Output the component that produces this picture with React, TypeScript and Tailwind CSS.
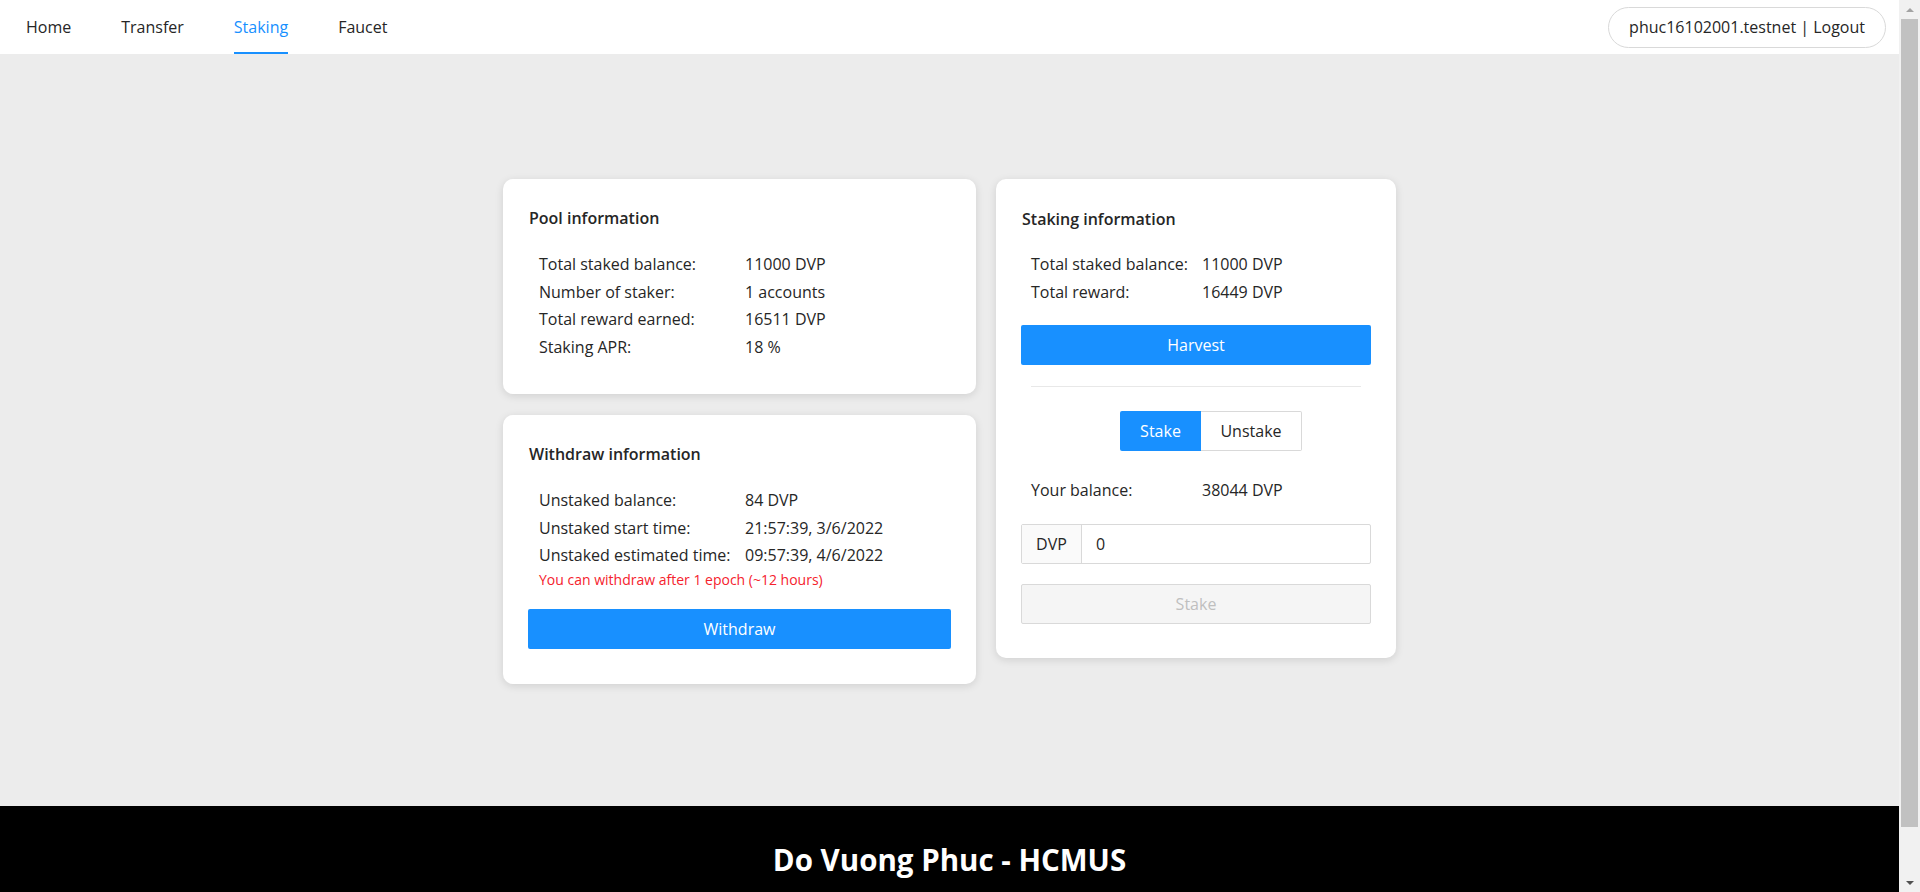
/**
 * Staking page
 */
import { ReactNode } from 'react';

const font = "font-['Open_Sans',sans-serif]";

function Navigation() {
  const items = ['Home', 'Transfer', 'Staking', 'Faucet'];

  return (
    <nav className="h-[54px] bg-white flex justify-between items-center pl-[1px] pr-[13px]">
      <div className="flex h-full">
        {items.map((item) => (
          <a
            key={item}
            className={
              item === 'Staking'
                ? 'mx-[25px] h-full flex items-center pt-[2px] border-b-2 border-[#1890ff] text-[#1890ff] text-[16px]'
                : 'mx-[25px] h-full flex items-center pt-[2px] border-b-2 border-transparent text-[#262626] text-[16px]'
            }
          >
            {item}
          </a>
        ))}
      </div>
      <button className="h-[41px] px-[20px] rounded-full border border-[#d9d9d9] bg-white text-[16px] text-[#262626]">
        phuc16102001.testnet | Logout
      </button>
    </nav>
  );
}

function Card({ title, width, children }: { title: string; width: string; children: ReactNode }) {
  return (
    <div className={`${width} bg-white rounded-[10px] shadow-[0_2px_8px_rgba(0,0,0,0.12)] px-[25px] pt-[27px]`}>
      <div className="pl-[1px] text-[16px] leading-[24px] font-semibold text-[#262626]">{title}</div>
      {children}
    </div>
  );
}

function InfoRows({ rows, labelWidth, indent }: { rows: [string, string][]; labelWidth: string; indent: string }) {
  return (
    <div className={`${indent} text-[16px] leading-[27.7px] text-[#262626]`}>
      {rows.map(([label, value]) => (
        <div key={label} className="flex">
          <div className={`${labelWidth} shrink-0`}>{label}</div>
          <div>{value}</div>
        </div>
      ))}
    </div>
  );
}

function PoolCard() {
  return (
    <Card title="Pool information" width="w-[473px] pb-[32px]">
      <div className="mt-[21px]">
        <InfoRows
          labelWidth="w-[206px]"
          indent="pl-[11px]"
          rows={[
            ['Total staked balance:', '11000 DVP'],
            ['Number of staker:', '1 accounts'],
            ['Total reward earned:', '16511 DVP'],
            ['Staking APR:', '18 %'],
          ]}
        />
      </div>
    </Card>
  );
}

function WithdrawCard() {
  return (
    <Card title="Withdraw information" width="w-[473px] pb-[35px]">
      <div className="mt-[21px]">
        <InfoRows
          labelWidth="w-[206px]"
          indent="pl-[11px]"
          rows={[
            ['Unstaked balance:', '84 DVP'],
            ['Unstaked start time:', '21:57:39, 3/6/2022'],
            ['Unstaked estimated time:', '09:57:39, 4/6/2022'],
          ]}
        />
      </div>
      <div className="pl-[11px] text-[14px] leading-[20px] text-[#f5222d]">
        You can withdraw after 1 epoch (~12 hours)
      </div>
      <button className="mt-[19px] w-full h-[40px] rounded-[2px] bg-[#1890ff] text-white text-[16px]">
        Withdraw
      </button>
    </Card>
  );
}

function StakingCard() {
  return (
    <Card title="Staking information" width="w-[400px] pb-[34px] pt-[28px]">
      <div className="mt-[20px]">
        <InfoRows
          labelWidth="w-[171px]"
          indent="pl-[10px]"
          rows={[
            ['Total staked balance:', '11000 DVP'],
            ['Total reward:', '16449 DVP'],
          ]}
        />
      </div>
      <button className="mt-[19px] w-full h-[40px] rounded-[2px] bg-[#1890ff] text-white text-[16px]">
        Harvest
      </button>
      <div className="mt-[21px] mx-[10px] h-px bg-[#e8e8e8]" />

      {/* Stake / Unstake switch */}
      <div className="mt-[24px] flex justify-center pl-[30px]">
        <div className="flex h-[40px] text-[16px]">
          <div className="w-[81px] flex items-center justify-center bg-[#1890ff] text-white rounded-l-[2px]">
            Stake
          </div>
          <div className="w-[101px] flex items-center justify-center border border-l-0 border-[#d9d9d9] text-[#262626] rounded-r-[2px]">
            Unstake
          </div>
        </div>
      </div>

      <div className="mt-[26px]">
        <InfoRows labelWidth="w-[171px]" indent="pl-[10px]" rows={[['Your balance:', '38044 DVP']]} />
      </div>

      <div className="mt-[19px] flex h-[40px] border border-[#d9d9d9] rounded-[2px] text-[16px] text-[#262626]">
        <div className="w-[60px] flex items-center justify-center bg-[#fafafa] border-r border-[#d9d9d9]">DVP</div>
        <div className="flex-1 flex items-center pl-[14px]">0</div>
      </div>
      <button className="mt-[20px] w-full h-[40px] rounded-[2px] border border-[#d9d9d9] bg-[#f5f5f5] text-[#bfbfbf] text-[16px]">
        Stake
      </button>
    </Card>
  );
}

// browser scrollbar seen in the screenshot
function Scrollbar() {
  return (
    <div className="w-[21px] h-[892px] shrink-0 bg-[#f1f1f1] flex flex-col items-center">
      <svg width="10" height="19" viewBox="0 0 10 19" className="shrink-0">
        <path d="M1 12 L5 8 L9 12 Z" fill="#a3a3a3" />
      </svg>
      <div className="w-[17px] h-[808px] bg-[#c1c1c1]" />
      <div className="flex-1" />
      <svg width="10" height="19" viewBox="0 0 10 19" className="shrink-0">
        <path d="M1 8 L5 12 L9 8 Z" fill="#505050" />
      </svg>
    </div>
  );
}

export default function App() {
  return (
    <div className={`${font} flex items-start`}>
      <div className="flex-1 bg-[#ececec]">
        <Navigation />

        {/* Main Content */}
        <main className="h-[752px] flex justify-center items-start gap-[20px] pt-[125px]">
          <div className="flex flex-col gap-[21px]">
            <PoolCard />
            <WithdrawCard />
          </div>
          <StakingCard />
        </main>

        <footer className="h-[140px] bg-black pt-[33px] text-center">
          <div className="text-[29.5px] leading-[42px] font-bold text-white">Do Vuong Phuc - HCMUS</div>
        </footer>
      </div>
      <Scrollbar />
    </div>
  );
}
